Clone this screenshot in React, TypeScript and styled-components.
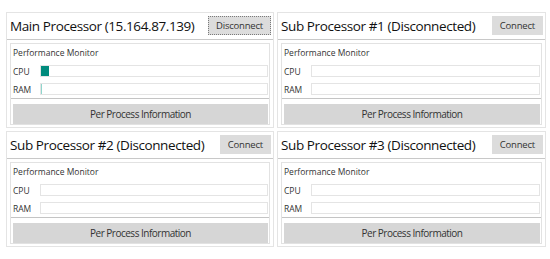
import React from 'react';
import styled, { createGlobalStyle } from 'styled-components';

const GlobalStyle = createGlobalStyle`
  html, body {
    margin: 0;
    padding: 0;
    background: #ffffff;
    font-family: "Open Sans", "Noto Sans", sans-serif;
    color: #1b1b1b;
  }
`;

interface Processor {
  title: string;
  connected: boolean;
  cpu: number;
  ram: number;
}

const processors: Processor[] = [
  { title: 'Main Processor (15.164.87.139)', connected: true, cpu: 3.5, ram: 0.4 },
  { title: 'Sub Processor #1 (Disconnected)', connected: false, cpu: 0, ram: 0 },
  { title: 'Sub Processor #2 (Disconnected)', connected: false, cpu: 0, ram: 0 },
  { title: 'Sub Processor #3 (Disconnected)', connected: false, cpu: 0, ram: 0 },
];

const Grid = styled.div`
  display: grid;
  grid-template-columns: 268px 269px;
  grid-auto-rows: 116px;
  gap: 3px;
  padding: 12px 0 0 6px;
`;

const Panel = styled.section`
  display: flex;
  flex-direction: column;
  border: 1px solid #e4e4e4;
  box-sizing: border-box;
`;

const Header = styled.header`
  height: 26px;
  display: flex;
  align-items: center;
  justify-content: space-between;
  padding: 0 2px 0 3px;
  border-bottom: 1px solid #c8c8c8;
`;

const Title = styled.h2`
  margin: 0;
  font-size: 13.5px;
  font-weight: 400;
  letter-spacing: -0.4px;
  color: #111;
  white-space: nowrap;
`;

const HeaderButton = styled.button<{ $focused?: boolean }>`
  height: 19px;
  padding: 0 7px;
  margin-top: -2px;
  background: #dcdcdc;
  border: 1px ${(p) => (p.$focused ? 'dotted #7a7a7a' : 'solid #dcdcdc')};
  font-family: inherit;
  font-size: 9.5px;
  letter-spacing: -0.2px;
  color: #333;
  cursor: pointer;
`;

const GroupBox = styled.div`
  margin: 3px 3px 2px;
  border: 1px solid #e2e2e2;
  flex: 1;
  display: flex;
  flex-direction: column;
`;

const Monitor = styled.div`
  padding: 3px 1px 3px 2px;
  border-bottom: 1px solid #c4c4c4;
  display: flex;
  flex-direction: column;
  gap: 6px;
`;

const MonitorLabel = styled.div`
  height: 12px;
  line-height: 12px;
  font-size: 8.5px;
  color: #333;
`;

const MeterRow = styled.div`
  display: flex;
  align-items: center;
  height: 12px;
`;

const MeterName = styled.span`
  width: 27px;
  font-size: 8.5px;
  color: #333;
`;

const Bar = styled.div`
  flex: 1;
  height: 12px;
  box-sizing: border-box;
  border: 1px solid #e4e4e4;
  background: #fff;
  display: flex;
`;

const Fill = styled.div<{ $faint?: boolean }>`
  height: 100%;
  background: ${(p) => (p.$faint ? '#8fd6cd' : '#008b7d')};
`;

const Actions = styled.div`
  padding: 5px 1px 0 2px;
  display: flex;
`;

const WideButton = styled.button`
  flex: 1;
  height: 20px;
  background: #d6d6d6;
  border: none;
  font-family: inherit;
  font-size: 10px;
  letter-spacing: -0.5px;
  color: #333;
  cursor: pointer;
`;

function Meter({ name, value, faint }: { name: string; value: number; faint?: boolean }) {
  return (
    <MeterRow>
      <MeterName>{name}</MeterName>
      <Bar>{value > 0 && <Fill $faint={faint} style={{ width: `${value}%` }} />}</Bar>
    </MeterRow>
  );
}

function ProcessorPanel({ proc }: { proc: Processor }) {
  return (
    <Panel>
      <Header>
        <Title>{proc.title}</Title>
        <HeaderButton $focused={proc.connected}>{proc.connected ? 'Disconnect' : 'Connect'}</HeaderButton>
      </Header>
      <GroupBox>
        <Monitor>
          <MonitorLabel>Performance Monitor</MonitorLabel>
          <Meter name="CPU" value={proc.cpu} />
          <Meter name="RAM" value={proc.ram} faint />
        </Monitor>
        <Actions>
          <WideButton>Per Process Information</WideButton>
        </Actions>
      </GroupBox>
    </Panel>
  );
}

export default function App(): JSX.Element {
  return (
    <>
      <GlobalStyle />
      <Grid>
        {processors.map((p) => (
          <ProcessorPanel key={p.title} proc={p} />
        ))}
      </Grid>
    </>
  );
}
